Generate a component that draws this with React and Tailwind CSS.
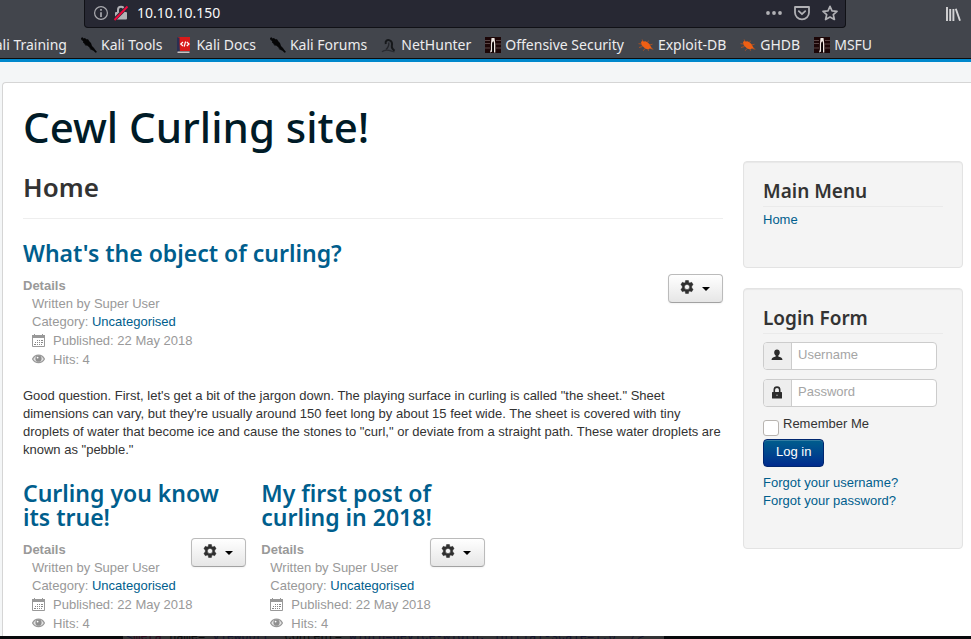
const HEADING = "font-['Noto_Sans','Open_Sans',sans-serif]";

/* ---------- icons ---------- */

function DragonIcon() {
  return (
    <svg viewBox="0 0 16 16" className="size-4 shrink-0" aria-hidden="true">
      <path d="M0 1 1.500 .3 2.500 1.600 4 1 5.200 2.300 7 2.300 8.500 4.500 10 6 11 9 13 11 14 12.500 16 15 14.500 15.700 12.500 13.800 10.200 12.800 8.200 10.200 6.500 8.800 4.500 8 3 6.200 2 5.500 2.200 4 .5 3z" fill="#050506" />
      <path d="M.5 2.500 2 3.500M9 11.500 10.500 13M4 7.500 5.500 9" stroke="#17181b" strokeWidth="1" fill="none" />
    </svg>
  );
}

function BookIcon() {
  return (
    <svg viewBox="0 0 16 16" className="size-4 shrink-0" aria-hidden="true">
      <path d="M2 0h12v14H4z" fill="#d91a1a" />
      <path d="M1 .5h2.500v13.500L1 15z" fill="#2b2f52" />
      <path d="M1.500 16v-1.500h12V16z" fill="#c9c2c2" />
      <path d="M7 5 4.800 7 7 9M10.800 5 13 7l-2.200 2M9.600 4.500 8.200 9.600" stroke="#fff" strokeWidth="1.200" fill="none" />
    </svg>
  );
}

function NetHunterIcon() {
  return (
    <svg viewBox="0 0 16 16" className="size-4 shrink-0" aria-hidden="true">
      <path d="M4.800 7C4 4 6 2.800 8.200 3.200c2.800.5 3.200 3.300 2.600 6-.3 1.800.9 3.100 2.700 4.600" stroke="#16181b" strokeWidth="2" fill="none" />
      <path d="M7.800 5.500c.3 2.800-.2 4.700-2.800 7" stroke="#23252a" strokeWidth="1.300" fill="none" />
      <path d="M1 14.800c2-1.800 4.500-2 7-1.400s4 1 5.500 1.400" stroke="#292b30" strokeWidth="1.200" fill="none" />
    </svg>
  );
}

function OffsecIcon() {
  return (
    <svg viewBox="0 0 16 16" className="size-4 shrink-0" aria-hidden="true">
      <path d="M0 0h16v16H0z" fill="#1c0607" />
      <path d="M0 3.500h5M11 3.500h5M0 6.500h5M11 7h5M0 11h5M11 11h5" stroke="#5b4646" strokeWidth="1.200" />
      <path d="M6.500 1h3l.8 6v8.500H9V6L8.300 4 7.300 6v8.500L5 15.500l.9-3V7z" fill="#efe7e2" />
      <path d="M8 4.500 8.900 7v8H7.200V7z" fill="#080304" />
    </svg>
  );
}

function BugIcon() {
  return (
    <svg viewBox="0 0 16 16" className="size-4 shrink-0" aria-hidden="true">
      <path d="M3 5 4.500 3.800l1.200.6 1.800-.2 2.300 1.300 2 2 1.200 2.500 1.500 2-2.500-.5-1.800.7-2.700-.5-2-1.700L3.500 8z" fill="#ee5f14" />
      <path d="m5 4.500-.8-2M9.500 5.500l1-1.800M11.500 8l3-.8M3.500 7l-3-.3M4.500 9.500l-3.500 1M7 11.500l-1.800 2.300M10 12l.5 1.800M12.500 11.500l2.800.8" stroke="#b95420" strokeWidth=".8" />
    </svg>
  );
}

function InfoIcon() {
  return (
    <svg viewBox="0 0 16 16" className="size-4 shrink-0" fill="none" stroke="#a9a9ae" aria-hidden="true">
      <circle cx="8" cy="8" r="6.400" strokeWidth="1.200" />
      <path d="M8 7.200V12M8 4v1.800" strokeWidth="1.700" />
    </svg>
  );
}

function InsecureIcon() {
  return (
    <svg viewBox="0 0 16 16" className="size-4 shrink-0" fill="none" aria-hidden="true">
      <path d="M5 8V4.800a3 3 0 0 1 6 0V8" stroke="#b1b1b5" strokeWidth="2" />
      <rect x="2" y="7" width="12" height="7.500" rx="1" fill="#b1b1b5" />
      <path d="M1.500 14.500 14.500 1.500" stroke="#272833" strokeWidth="3.400" />
      <path d="M1.500 15 14.500 1.500" stroke="#f0083c" strokeWidth="1.900" />
    </svg>
  );
}

function DotsIcon() {
  return (
    <svg viewBox="0 0 16 16" className="size-4" fill="#b1b1b5" aria-hidden="true">
      <circle cx="2" cy="8" r="1.900" /><circle cx="8" cy="8" r="1.900" /><circle cx="14" cy="8" r="1.900" />
    </svg>
  );
}

function PocketIcon() {
  return (
    <svg viewBox="0 0 16 16" className="size-4" fill="none" stroke="#b1b1b5" strokeWidth="1.800" strokeLinecap="round" strokeLinejoin="round" aria-hidden="true">
      <path d="M1 2h14v5.500a7 6.800 0 0 1-14 0z" />
      <path d="M4.800 6.200 8 9.200l3.200-3" />
    </svg>
  );
}

function StarIcon() {
  return (
    <svg viewBox="0 0 16 16" className="size-4" fill="none" stroke="#b1b1b5" strokeWidth="1.700" strokeLinejoin="round" aria-hidden="true">
      <path d="m8 1.300 2 4.500 5 .5-3.700 3.300 1.100 4.900L8 12l-4.400 2.500 1.100-4.900L1 6.300l5-.5z" />
    </svg>
  );
}

function LibraryIcon() {
  return (
    <svg viewBox="0 0 16 16" className="size-4" fill="none" stroke="#d4d4d6" strokeWidth="1.900" aria-hidden="true">
      <path d="M2 1v14M5.200 3v12M8.400 3v12M10.800 2.800 15 14.700" />
    </svg>
  );
}

function GearIcon() {
  return (
    <svg viewBox="0 0 14 14" className="size-[14px]" aria-hidden="true">
      <path
        fill="#2f2f2f"
        stroke="#2f2f2f"
        strokeWidth=".5"
        strokeLinejoin="round"
        fillRule="evenodd"
        d="M5.600.5h2.800l.4 1.900 1 .6 1.900-.7 1.400 2.400L11.700 6v2l1.400 1.300-1.400 2.400-1.900-.7-1 .6-.4 1.900H5.600l-.4-1.900-1-.6-1.900.7L.9 9.300 2.300 8V6L.9 4.700l1.400-2.400 1.900.7 1-.6zM7 4.400a2.600 2.600 0 1 0 0 5.200 2.600 2.600 0 0 0 0-5.200z"
      />
    </svg>
  );
}

function CaretIcon() {
  return (
    <svg viewBox="0 0 8 4" className="mt-1 h-1 w-2" aria-hidden="true">
      <path d="M0 0h8L4 4z" fill="#000" />
    </svg>
  );
}

function CalendarIcon() {
  return (
    <svg viewBox="0 0 13 13" className="mb-0.5 size-[13px]" aria-hidden="true">
      <path d="M.5 1.500h12v11H.5z" fill="#fff" stroke="#999" />
      <path d="M0 1h2V0h1v1h7V0h1v1h2v3H0z" fill="#999" />
      <path d="M5 6h1v1H5zM7 6h1v1H7zM9 6h2v1H9zM3 8h1v1H3zM5 8h1v1H5zM7 8h1v1H7zM9 8h2v1H9zM2 10h2v1H2zM5 10h1v1H5zM7 10h1v1H7zM9 10h1v1H9z" fill="#888" />
    </svg>
  );
}

function EyeIcon() {
  return (
    <svg viewBox="0 0 13 10" className="mb-0.5 h-[10px] w-[13px]" aria-hidden="true">
      <path d="M.6 5C2 2.400 4 1.200 6.500 1.200S11 2.400 12.400 5C11 7.600 9 8.600 6.500 8.600S2 7.600.6 5z" fill="#e4e4e4" stroke="#999" strokeWidth="1.300" />
      <circle cx="6.500" cy="4.700" r="3.100" fill="#8f8f8f" />
      <circle cx="5.600" cy="3.600" r=".9" fill="#fff" />
    </svg>
  );
}

function UserIcon() {
  return (
    <svg viewBox="0 0 12 12" className="size-3" fill="#2b2b2b" aria-hidden="true">
      <path d="M6 .5c1.700 0 2.800 1.200 2.800 2.900 0 1.300-.6 2.500-1.500 3.200v1c1.800.5 4.200 1.300 4.200 3.400H.5c0-2.100 2.400-2.900 4.200-3.400v-1C3.800 5.900 3.200 4.700 3.200 3.400 3.200 1.700 4.300.5 6 .5z" />
    </svg>
  );
}

function LockIcon() {
  return (
    <svg viewBox="0 0 12 13" className="h-[13px] w-3" aria-hidden="true">
      <path d="M3.300 6V3.800a2.700 2.700 0 0 1 5.400 0V6" fill="none" stroke="#2b2b2b" strokeWidth="1.600" />
      <rect x="1" y="6" width="10" height="6.500" rx=".6" fill="#2b2b2b" />
      <circle cx="6" cy="9.300" r=".8" fill="#aaa" />
    </svg>
  );
}

/* ---------- browser chrome ---------- */

const BOOKMARKS = [
  { label: 'Kali Tools', Icon: DragonIcon },
  { label: 'Kali Docs', Icon: BookIcon },
  { label: 'Kali Forums', Icon: DragonIcon },
  { label: 'NetHunter', Icon: NetHunterIcon },
  { label: 'Offensive Security', Icon: OffsecIcon },
  { label: 'Exploit-DB', Icon: BugIcon },
  { label: 'GHDB', Icon: BugIcon },
  { label: 'MSFU', Icon: OffsecIcon },
];

function BrowserBar() {
  return (
    <header className="shrink-0 border-b border-[#0c0c0d] bg-[#42454c] font-['Noto_Sans',sans-serif] text-sm text-[#ececee]">
      <div className="flex items-center justify-between pr-[10px] pl-[84px]">
        <div className="flex h-7 w-[762px] items-center gap-1 rounded-b border border-t-0 border-[#101116] bg-[#272833] pr-[7px] pb-px pl-2">
          <InfoIcon />
          <InsecureIcon />
          <input aria-label="Address" defaultValue="10.10.10.150" className="ml-1 min-w-0 flex-1 bg-transparent text-[#f9f9fa] outline-none" />
          <div className="flex gap-3">
            <button type="button" aria-label="Page actions"><DotsIcon /></button>
            <button type="button" aria-label="Save to Pocket"><PocketIcon /></button>
            <button type="button" aria-label="Bookmark this page"><StarIcon /></button>
          </div>
        </div>
        <button type="button" aria-label="Library"><LibraryIcon /></button>
      </div>
      <nav className="flex h-[30px] items-center gap-[14px] overflow-hidden pt-1 whitespace-nowrap">
        <a href="#training" className="-ml-[14px]">Kali Training</a>
        {BOOKMARKS.map(({ label, Icon }) => (
          <a key={label} href="#bookmark" className="flex items-center gap-1">
            <Icon />
            {label}
          </a>
        ))}
      </nav>
    </header>
  );
}

/* ---------- articles ---------- */

function Article({ title }) {
  return (
    <article>
      <h2 className={`${HEADING} text-[23px] leading-6 font-semibold text-[#005e8d]`}>
        <a href="#article">{title}</a>
      </h2>
      <div className="mt-[9px] flex items-start justify-between">
        <dl className="pt-[3px] text-[#999]">
          <dt className="font-bold">Details</dt>
          <dd className="pl-[9px]">Written by Super User</dd>
          <dd className="pl-[9px]">
            Category: <a href="#category" className="text-[#005e8d]">Uncategorised</a>
          </dd>
          <dd className="mt-px flex items-center gap-2 pl-[9px]"><CalendarIcon /> Published: 22 May 2018</dd>
          <dd className="mt-px flex items-center gap-2 pl-[9px]"><EyeIcon /> Hits: 4</dd>
        </dl>
        <button
          type="button"
          aria-label="Article options"
          className="-ml-4 flex h-[29px] w-[55px] shrink-0 items-center justify-center gap-2 rounded border border-[#bbb] border-b-[#a2a2a2] bg-linear-to-b from-white to-[#e6e6e6] pr-0.5 pb-1 shadow-xs"
        >
          <GearIcon />
          <CaretIcon />
        </button>
      </div>
    </article>
  );
}

/* ---------- sidebar ---------- */

function Well({ title, children }) {
  return (
    <section className="rounded border border-[#e3e3e3] bg-[#f4f4f4] px-[19px] pt-[19px] pb-[38px] shadow-[inset_0_1px_1px_rgba(0,0,0,0.05)]">
      <h3 className={`${HEADING} border-b border-[#eaeaea] pb-[5px] text-[19px] leading-5 font-semibold`}>{title}</h3>
      {children}
    </section>
  );
}

function Field({ id, label, type, Icon }) {
  return (
    <div className="flex h-7 w-[174px] overflow-hidden rounded border border-[#ccc] bg-white">
      <label htmlFor={id} aria-label={label} className="flex w-7 shrink-0 items-center justify-center border-r border-[#ccc] bg-[#eee] pr-0.5 pb-0.5">
        <Icon />
      </label>
      <input id={id} type={type} placeholder={label} className="min-w-0 flex-1 px-1.5 pb-0.5 leading-[18px] outline-none placeholder:text-[#a5a5a5]" />
    </div>
  );
}

function LoginForm() {
  return (
    <form className="mt-2">
      <div className="flex flex-col gap-[9px]">
        <Field id="username" label="Username" type="text" Icon={UserIcon} />
        <Field id="password" label="Password" type="password" Icon={LockIcon} />
      </div>
      <div className="mt-2 flex items-end gap-1">
        <input id="remember" type="checkbox" className="mt-[5px] size-4 shrink-0 appearance-none rounded-[3px] border border-[#b8b4b0] bg-white" />
        <label htmlFor="remember" className="self-start">Remember Me</label>
      </div>
      <button
        type="button"
        className="mt-[3px] flex h-7 items-center rounded border border-[#00266f] bg-linear-to-b from-[#005e8d] to-[#002a8d] px-3 pb-0.5 text-white shadow-[inset_0_1px_0_rgba(255,255,255,0.2)]"
      >
        Log in
      </button>
      <ul className="mt-[7px] text-[#005e8d]">
        <li><a href="#remind">Forgot your username?</a></li>
        <li><a href="#reset">Forgot your password?</a></li>
      </ul>
    </form>
  );
}

/* ---------- page ---------- */

export default function App() {
  return (
    <div className="flex h-screen flex-col overflow-hidden bg-[#f4f6f7] font-['Liberation_Sans',Arial,sans-serif] text-[13px] leading-[18px] text-[#333]">
      <BrowserBar />
      <main className="min-h-0 flex-1 overflow-hidden border-t-[3px] border-[#0088cc] pt-5 pl-0.5">
        <div className="min-h-full rounded-tl border-t border-l border-[#d5d5d5] bg-white pt-5 pr-2 pl-5">
          <h1 className={`${HEADING} text-[42px] leading-[48px] font-medium text-[#001b27]`}>
            <a href="#home">Cewl Curling site!</a>
          </h1>
          <div className="mt-[10px] flex items-start gap-5">
            <div className="min-w-0 flex-1">
              <h2 className={`${HEADING} border-b border-[#eee] pt-2 pb-[13px] text-[26px] leading-9 font-semibold`}>Home</h2>
              <div className="mt-[22px]">
                <Article title="What's the object of curling?" />
                <p className="mt-[18px]">
                  Good question. First, let's get a bit of the jargon down. The playing surface in curling is called "the
                  sheet." Sheet dimensions can vary, but they're usually around 150 feet long by about 15 feet wide. The
                  sheet is covered with tiny droplets of water that become ice and cause the stones to "curl," or deviate
                  from a straight path. These water droplets are known as "pebble."
                </p>
              </div>
              <div className="mt-[22px] grid grid-cols-3 gap-[15px]">
                <Article title="Curling you know its true!" />
                <Article title="My first post of curling in 2018!" />
              </div>
            </div>
            <aside className="flex w-[220px] shrink-0 flex-col gap-5">
              <Well title="Main Menu">
                <nav className="mt-1"><a href="#home" className="text-[#005e8d]">Home</a></nav>
              </Well>
              <Well title="Login Form">
                <LoginForm />
              </Well>
            </aside>
          </div>
        </div>
      </main>
      <footer className="flex h-[3px] shrink-0 overflow-hidden bg-[#08090b] pl-[123px] font-['Liberation_Mono',monospace] text-xs leading-[3px] whitespace-pre text-[#15152f]">
        <code className="w-[541px] overflow-hidden bg-[#333335] pl-[3px] font-['Liberation_Mono',monospace]">
          {'<'}<span className="text-[#2c0a1c]">meta</span> <span className="text-[#0c0c0c]">name=</span>"viewport" <span className="text-[#0c0c0c]">content=</span>"width=device-width, initial-scale=1.0" {'/>'}
        </code>
      </footer>
    </div>
  );
}
